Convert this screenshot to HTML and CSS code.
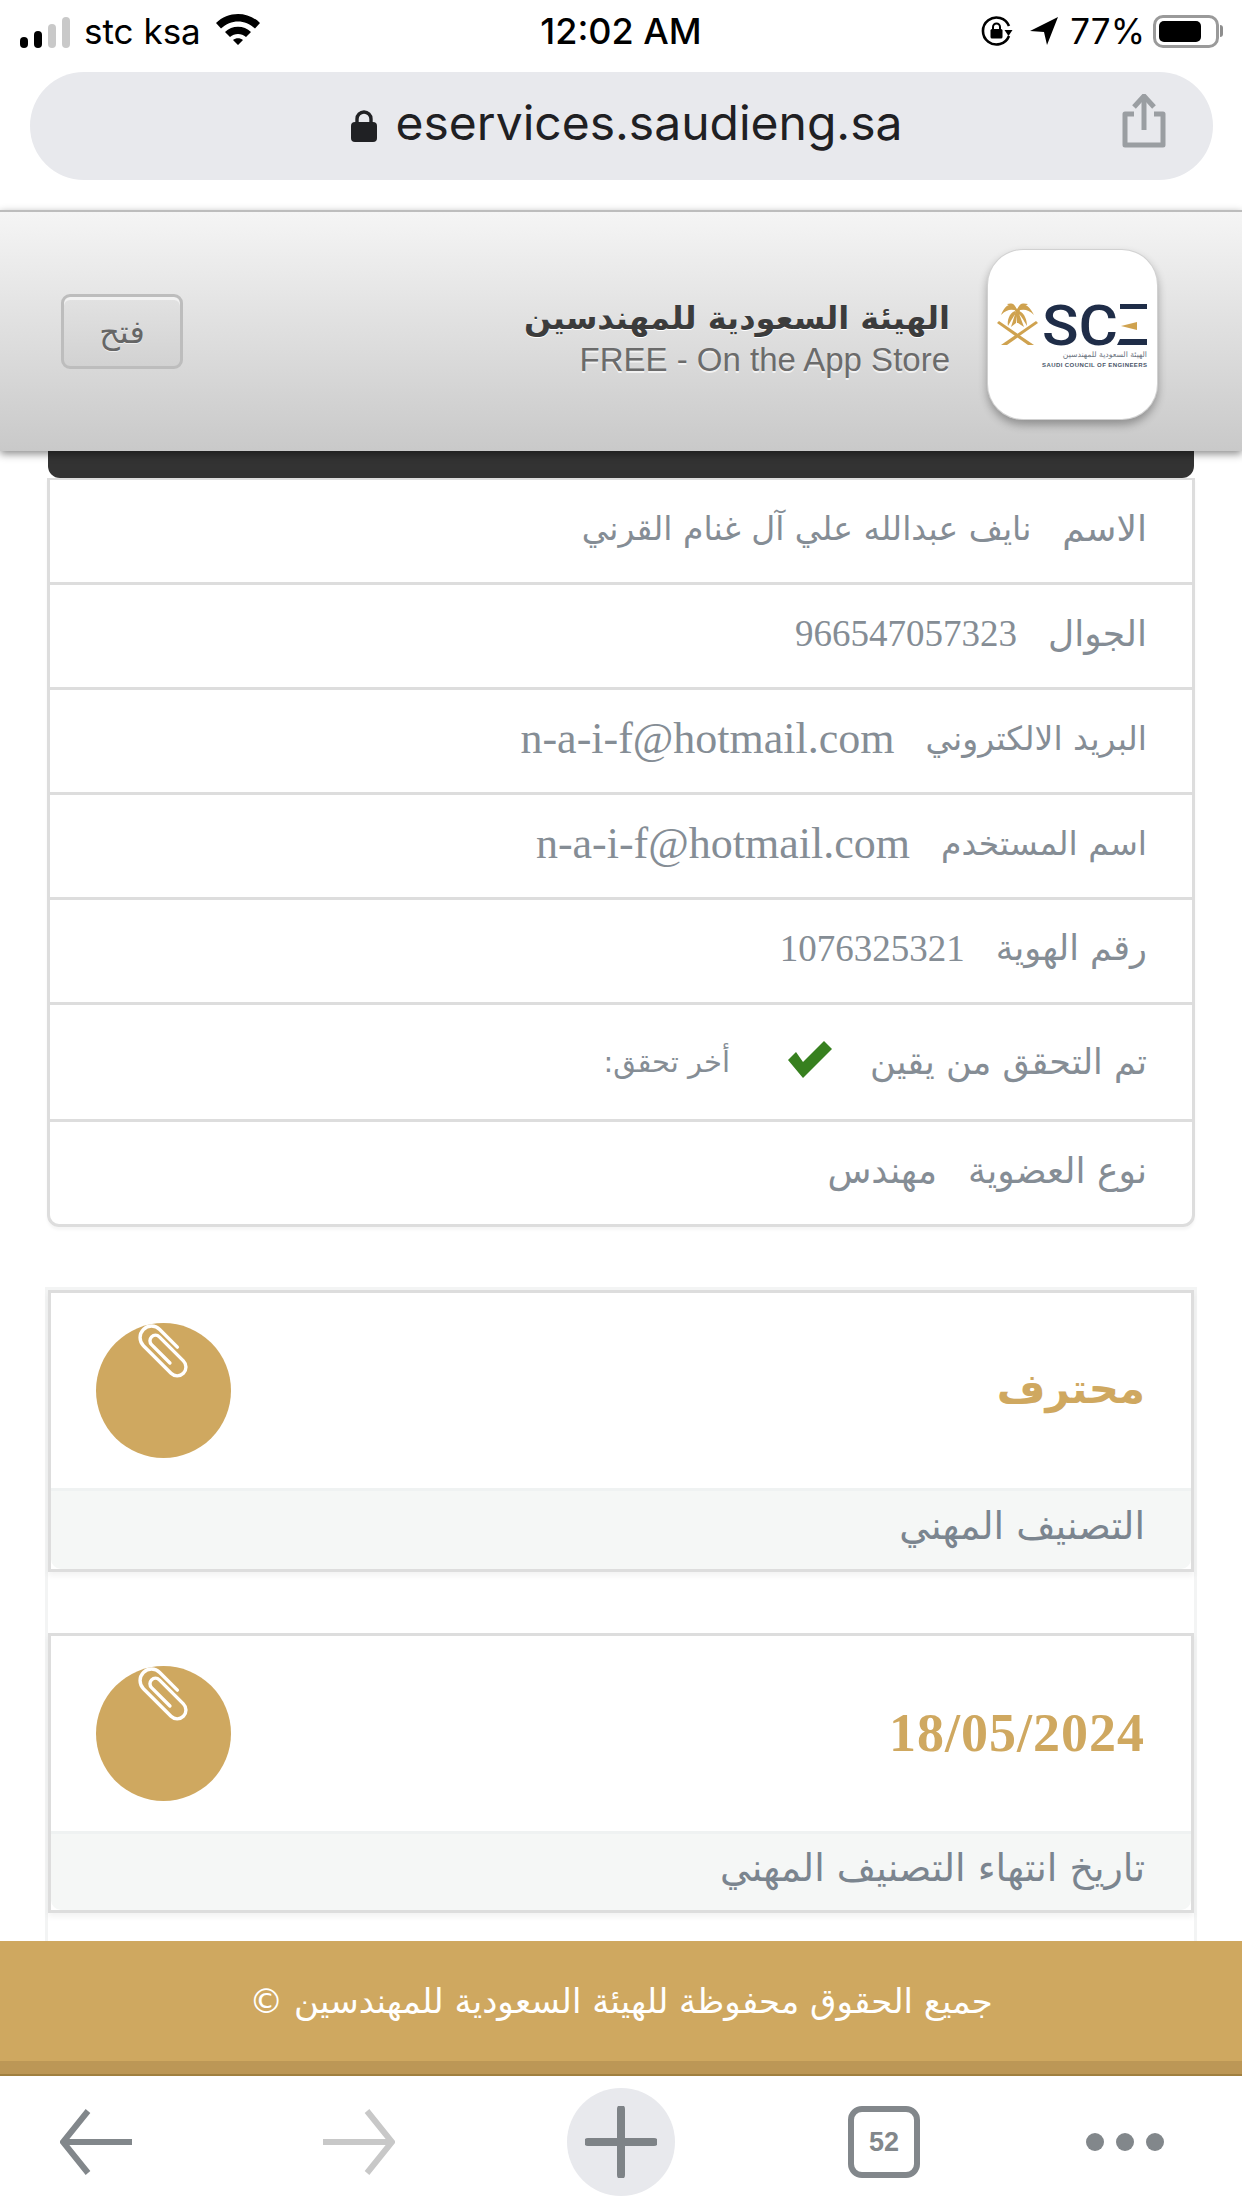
FILE: index.html
```html
<!DOCTYPE html>
<html lang="ar">
<head>
<meta charset="utf-8">
<title>eservices.saudieng.sa</title>
<link rel="stylesheet" href="styles.css">
</head>
<body>
<div class="phone">
  <header class="status">
    <div class="status-left">
      <span class="signal"><i class="b1"></i><i class="b2"></i><i class="b3"></i><i class="b4"></i></span>
      <span class="carrier">stc ksa</span>
      <svg class="wifi" width="46" height="32" viewBox="0 0 46 32"><path d="M1 10 C13 -2 33 -2 45 10 L40 15.500 C30 6 16 6 6 15.500Z M10 19 C17 12 29 12 36 19 L31 24 C26.500 20 19.500 20 15 24Z M18 27 C21 24.500 25 24.500 28 27 L23 32Z" fill="#000"/></svg>
    </div>
    <div class="time">12:02 AM</div>
    <div class="status-right">
      <svg class="orient" width="32" height="32" viewBox="0 0 32 32"><path d="M28 21 A13.500 13.500 0 1 1 28 11" fill="none" stroke="#000" stroke-width="2.600"/><path d="M23.500 15 L31.500 15 L27.500 21Z" fill="#000"/><rect x="9.500" y="14" width="12" height="9.500" rx="1.500" fill="#000"/><path d="M12 14.500 V12 a3.500 3.500 0 0 1 7 0 V14.500" fill="none" stroke="#000" stroke-width="2"/></svg>
      <svg class="nav" width="28" height="28" viewBox="0 0 28 28"><path d="M0 14 L28 0 L17 28 L14 15Z" fill="#000"/></svg>
      <span class="pct">77%</span>
      <span class="battery"><i class="level"></i></span><span class="nub"></span>
    </div>
  </header>

  <div class="url-wrap">
    <div class="url">
      <svg class="lock" width="26" height="32" viewBox="0 0 26 32"><rect x="0" y="12" width="26" height="20" rx="4" fill="#202124"/><path d="M6 14 V9 a7 7 0 0 1 14 0 V14" fill="none" stroke="#202124" stroke-width="3.400"/></svg>
      <span class="url-text">eservices.saudieng.sa</span>
      <svg class="share" width="44" height="54" viewBox="0 0 44 54"><path d="M12 20 H3 V51 H41 V20 H32" fill="none" stroke="#9a9ea2" stroke-width="5" stroke-linejoin="round"/><path d="M22 36 V3" stroke="#9a9ea2" stroke-width="5" fill="none"/><path d="M12 13 L22 2 L32 13" stroke="#9a9ea2" stroke-width="5" fill="none"/></svg>
    </div>
  </div>

  <section class="banner">
    <div class="app-icon">
      <svg width="171" height="171" viewBox="0 0 171 171">
        <g fill="#cfa24f">
          <path d="M30 74 L28 60 L33 60 L31 74Z"/>
          <path d="M30 60 C24 52 18 56 14 66 C20 60 25 60 30 62Z"/>
          <path d="M30 60 C36 52 42 56 47 66 C41 60 36 60 30 62Z"/>
          <path d="M29 60 C28 54 24 54 20 55 L29 62Z"/>
          <path d="M31 60 C32 54 36 54 41 55 L31 62Z"/>
          <path d="M28 62 C22 64 20 72 21 77 C25 70 27 67 29 64Z"/>
          <path d="M32 62 C38 64 40 72 40 77 C36 70 34 67 31 64Z"/>
          <path d="M29 62 L24 78 L29 74Z M31 62 L37 78 L31 74Z"/>
          <path d="M12 72 L47 96 L41 96 L10 74Z"/>
          <path d="M49 72 L14 96 L20 96 L51 74Z"/>
        </g>
        <text class="logo-sc" x="55" y="96" textLength="76" lengthAdjust="spacingAndGlyphs">SC</text>
        <path d="M133 55 H160 V60 L133 60Z M133 90 L160 90 V96 H130Z" fill="#1f2d48"/>
        <path d="M134 77 L150 73 V81Z" fill="#cfa24f"/>
        <text class="logo-ar" x="160" y="108">الهيئة السعودية للمهندسين</text>
        <text class="logo-en" x="55" y="118" textLength="105">SAUDI COUNCIL OF ENGINEERS</text>
      </svg>
    </div>
    <div class="app-text">
      <div class="app-name">الهيئة السعودية للمهندسين</div>
      <div class="app-sub" dir="ltr">FREE - On the App Store</div>
    </div>
    <div class="open-btn">فتح</div>
  </section>

  <main class="content">
    <div class="dark-bar"></div>
    <div class="info-card">
      <div class="row"><span class="label lg">الاسم</span><span class="value sm">نايف عبدالله علي آل غنام القرني</span></div>
      <div class="row"><span class="label lg">الجوال</span><span class="value num">966547057323</span></div>
      <div class="row"><span class="label sm">البريد الالكتروني</span><span class="value mail">n-a-i-f@hotmail.com</span></div>
      <div class="row"><span class="label sm">اسم المستخدم</span><span class="value mail">n-a-i-f@hotmail.com</span></div>
      <div class="row"><span class="label">رقم الهوية</span><span class="value num">1076325321</span></div>
      <div class="row row-tall">
        <span class="label">تم التحقق من يقين</span>
        <svg class="check" width="44" height="37" viewBox="0 0 44 37"><path d="M0 19 L8 11 L15 21 L36 0 L44 8 L15 37Z" fill="#37801f"/></svg>
        <span class="last-check">أخر تحقق:</span>
      </div>
      <div class="row"><span class="label lg">نوع العضوية</span><span class="value lg">مهندس</span></div>
    </div>

    <div class="panels">
      <article class="panel">
        <div class="panel-head">
          <div class="panel-title">محترف</div>
          <div class="clip-circle">
            <svg width="70" height="70" viewBox="-35 -35 70 70"><path transform="rotate(-45)" d="M11.500 6 V-19 A11.500 11.500 0 0 0 -11.500 -19 V20 A8.700 8.700 0 0 0 6 20 V-14 A5.500 5.500 0 0 0 -5 -14 V12" fill="none" stroke="#fff" stroke-width="3.400" stroke-linecap="round"/></svg>
          </div>
        </div>
        <div class="panel-foot">التصنيف المهني</div>
      </article>
      <article class="panel">
        <div class="panel-head">
          <div class="panel-title date">18/05/2024</div>
          <div class="clip-circle">
            <svg width="70" height="70" viewBox="-35 -35 70 70"><path transform="rotate(-45)" d="M11.500 6 V-19 A11.500 11.500 0 0 0 -11.500 -19 V20 A8.700 8.700 0 0 0 6 20 V-14 A5.500 5.500 0 0 0 -5 -14 V12" fill="none" stroke="#fff" stroke-width="3.400" stroke-linecap="round"/></svg>
          </div>
        </div>
        <div class="panel-foot">تاريخ انتهاء التصنيف المهني</div>
      </article>
    </div>
  </main>

  <footer class="gold-footer">
    <div class="gold-main">جميع الحقوق محفوظة للهيئة السعودية للمهندسين ©</div>
    <div class="gold-strip"></div>
  </footer>

  <nav class="toolbar">
    <svg class="tool" width="72" height="66" viewBox="0 0 72 66"><path d="M72 33 H4 M28 2 L3 33 L28 64" fill="none" stroke="#82878b" stroke-width="6"/></svg>
    <svg class="tool" width="72" height="66" viewBox="0 0 72 66"><path d="M0 33 H68 M44 2 L69 33 L44 64" fill="none" stroke="#c8c8c8" stroke-width="6"/></svg>
    <div class="plus-btn">
      <svg width="72" height="72" viewBox="0 0 72 72"><path d="M36 3 V69 M3 36 H69" stroke="#7e8387" stroke-width="8" stroke-linecap="round"/></svg>
    </div>
    <div class="tabs"><span>52</span></div>
    <div class="dots"><i></i><i></i><i></i></div>
  </nav>
</div>
</body>
</html>
```
FILE: styles.css
```css
* { box-sizing: border-box; }
html, body { margin: 0; padding: 0; background: #fff; }
.phone {
  width: 1242px; height: 2208px; overflow: hidden;
  display: flex; flex-direction: column;
  font-family: Inter, "Liberation Sans", sans-serif; color: #000;
}
.status {
  height: 60px; flex: none; display: grid; grid-template-columns: 1fr auto 1fr; align-items: center;
  padding: 2px 20px 0;
}
.status-left { display: flex; align-items: center; }
.signal { display: flex; align-items: flex-end; gap: 6px; height: 32px; margin-top: 1px; }
.signal i { width: 8px; border-radius: 4px; display: block; }
.signal .b1 { height: 11px; background: #000; }
.signal .b2 { height: 17px; background: #000; }
.signal .b3 { height: 24px; background: #c9c9c9; }
.signal .b4 { height: 31px; background: #c9c9c9; }
.carrier { font-size: 35px; margin-left: 14px; }
.wifi { margin-left: 14px; margin-top: -4px; }
.time { font-size: 36px; font-weight: 500; }
.status-right { display: flex; align-items: center; justify-content: flex-end; margin-right: -1px; }
.orient { margin-right: 17px; }
.nav { margin-right: 12px; }
.pct { font-size: 35px; margin-right: 8px; }
.battery { width: 66px; height: 33px; border: 3px solid #9a9a9a; border-radius: 10px; padding: 3px; display: block; }
.level { display: block; width: 42px; height: 100%; background: #000; border-radius: 5px; }
.nub { width: 3px; height: 12px; background: #8e8e8e; border-radius: 0 3px 3px 0; margin-left: 1px; }

.url-wrap { flex: none; height: 150px; padding: 12px 29px 30px 30px; }
.url {
  position: relative; height: 108px; border-radius: 54px; background: #e8e9ed;
  display: flex; align-items: center; justify-content: center; padding-left: 10px;
}
.lock { margin-right: 19px; }
.url-text { font-size: 48px; color: #1f2023; font-family: Inter, "Liberation Sans", sans-serif; margin-bottom: 7px; }
.share { position: absolute; right: 47px; top: 22px; }

.banner {
  position: relative; z-index: 2; flex: none; height: 241px;
  border-top: 2px solid #bdbdbd;
  background: linear-gradient(#f5f5f5, #c9c9c9);
  box-shadow: 0 3px 8px rgba(0,0,0,.45);
  display: flex; direction: rtl; align-items: center; padding: 0 84px 0 61px;
}
.app-icon {
  width: 171px; height: 171px; border-radius: 36px; background: #fff; flex: none;
  box-shadow: 0 5px 8px rgba(0,0,0,.3), inset 0 0 0 1px rgba(70,70,70,.25);
  margin-top: 6px;
}
.app-icon svg { display: block; direction: ltr; }
.logo-sc { font-family: Roboto, "Liberation Sans", sans-serif; font-size: 56px; font-weight: 500; fill: #1f2d48; }
.logo-ar { font-family: "DejaVu Sans", sans-serif; font-size: 7.700px; fill: #6c7480; direction: rtl; }
.logo-en { font-family: "Liberation Sans", sans-serif; font-size: 6px; font-weight: 700; fill: #4a5568; }
.app-text { margin-right: 37px; margin-top: 10px; }
.app-name {
  font-family: "DejaVu Sans", sans-serif; font-weight: 700; font-size: 32px; color: #3c3c3c; line-height: 46px;
  text-shadow: 0 1px 0 #fff;
}
.app-sub {
  font-family: "Liberation Sans", sans-serif; font-size: 33px; color: #6b6b6b; line-height: 38px; text-align: right;
  text-shadow: 0 2px 0 #f2f2f2;
}
.open-btn {
  margin-right: auto; width: 122px; height: 75px; border: 3px solid #bdbdbd; border-radius: 9px;
  box-shadow: inset 0 3px 0 #f2f2f2;
  background: linear-gradient(#e2e2e2, #d2d2d2);
  font-family: "DejaVu Sans", sans-serif; font-size: 32px; color: #666;
  display: flex; align-items: center; justify-content: center; text-shadow: 0 1px 0 #eee;
}

.content { flex: 1; min-height: 0; overflow: hidden; direction: rtl; font-family: "DejaVu Sans", sans-serif; }
.dark-bar { height: 27px; margin: 0 48px; background: #333; border-radius: 0 0 12px 12px; }
.info-card {
  margin: 0 47px; border: 3px solid #ddd; border-top-width: 2px; border-radius: 0 0 12px 12px;
  box-shadow: 0 3px 3px rgba(0,0,0,.04);
}
.row {
  height: 105px; padding: 0 45px 6px 0; border-bottom: 3px solid #ddd;
  display: flex; align-items: center; gap: 31px; color: #858d95; font-size: 35px;
}
.row:last-child { border-bottom: 0; height: 102px; }
.row-tall { height: 117px; padding-bottom: 0; }
.lg { font-size: 36px; }
.sm { font-size: 33px; }
.value { white-space: nowrap; }
.num { font-family: "Liberation Serif", serif; font-size: 37px; direction: ltr; }
.mail { font-family: "Liberation Serif", serif; font-size: 44px; direction: ltr; }
.check { margin: -6px 7px 0 27px; flex: none; }
.last-check { font-size: 29px; }

.panels {
  margin: 60px 45px 0; padding: 0 0 40px; border: 3px solid #f3f4f4; border-bottom: 0;
  display: flex; flex-direction: column; gap: 61px;
}
.panel { border: 3px solid #ddd; box-shadow: 0 4px 6px rgba(0,0,0,.05); }
.panel-head { height: 195px; display: flex; align-items: flex-start; justify-content: space-between; padding: 30px 46px 0 45px; }
.panel-title { color: #cfa860; font-size: 42px; font-weight: 700; line-height: 131px; }
.date { font-family: "Liberation Serif", serif; font-size: 54px; direction: ltr; letter-spacing: 1px; line-height: 135px; }
.clip-circle { width: 135px; height: 135px; border-radius: 50%; background: #cfa860; position: relative; flex: none; }
.clip-circle svg { position: absolute; left: 34px; top: -7px; display: block; }
.panel-foot {
  height: 81px; background: #f5f7f6; border-top: 3px solid #eff2f2; border-radius: 0 0 10px 10px;
  padding: 0 46px 8px 0; font-size: 38px; color: #7b858f; display: flex; align-items: center; white-space: nowrap;
}
.panel:last-child .panel-foot { height: 79px; }

.gold-footer { flex: none; direction: rtl; font-family: "DejaVu Sans", sans-serif; position: relative; z-index: 2; }
.gold-main { height: 120px; background: #cfa860; color: #fff; font-size: 34px; display: flex; align-items: center; justify-content: center; }
.gold-strip { height: 15px; background: #bc9756; border-bottom: 2px solid #a08040; }

.toolbar {
  flex: none; height: 132px; background: #fff;
  display: grid; grid-template-columns: 192px 334px 190px 336px 146px; align-items: center; justify-items: center;
}
.tool { display: block; }
.plus-btn { width: 108px; height: 108px; border-radius: 50%; background: #e8e9ed; display: flex; align-items: center; justify-content: center; }
.tabs {
  width: 72px; height: 72px; border: 6px solid #82878b; border-radius: 14px; display: flex; align-items: center; justify-content: center;
  font-family: "Liberation Sans", sans-serif; font-weight: 700; font-size: 27px; color: #82878b;
}
.dots { display: flex; gap: 12px; }
.dots i { width: 18px; height: 18px; border-radius: 50%; background: #82878b; display: block; }
```
